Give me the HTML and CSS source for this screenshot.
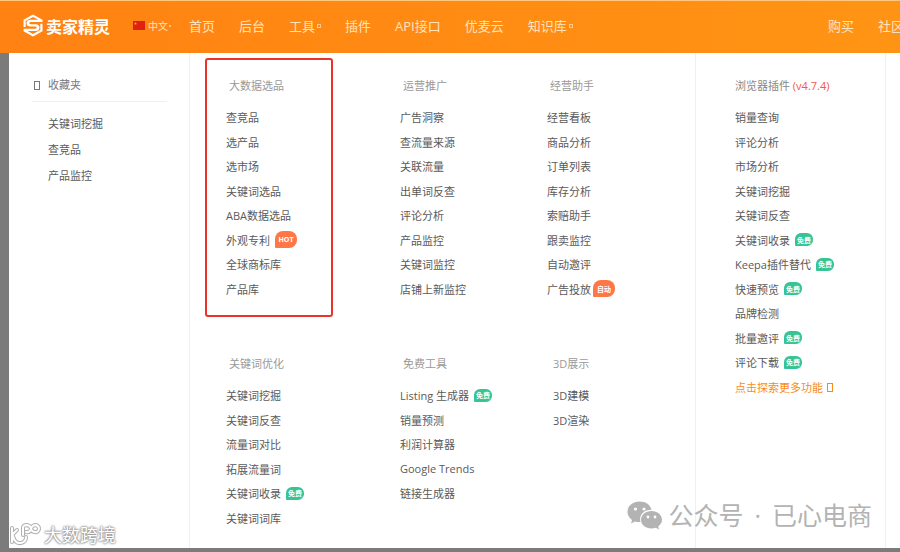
FILE: index.html
```html
<!DOCTYPE html>
<html lang="zh-CN">
<head>
    <meta charset="UTF-8">
    <meta name="viewport" content="width=device-width, initial-scale=1.0">
    <title>卖家精灵</title>
    <link rel="stylesheet" href="styles.css">
</head>
<body>
    <header class="header">
        <a class="logo" href="#">
            <svg class="logo-icon" viewBox="0 0 20 23" aria-hidden="true">
                <path d="M10 0.5 L19.5 5.8 V8 H8 Q6.300 8 6.300 9.300 Q6.300 10.200 8 10.200 H12.500 Q16.500 10.400 16.500 13.500 Q16.500 17 12.500 17 H4.500 L10 20 L17.300 16 V9.800 H19.500 V17.200 L10 22.500 L0.500 17.200 V14.800 H12 Q13.700 14.800 13.700 13.500 Q13.700 12.600 12 12.600 H7.500 Q3.500 12.400 3.500 9.300 Q3.500 5.800 7.500 5.800 H15.300 L10 3 L2.700 7 V13 H0.500 V5.800 Z" fill="#fff"/>
            </svg>
            <span>卖家精灵</span>
        </a>
        <a class="lang" href="#">
            <svg class="flag" viewBox="0 0 12 9" aria-hidden="true">
                <rect width="12" height="9" fill="#de2110"/>
                <path d="M2.500 1 L2.900 2.100 H4 L3.100 2.800 L3.400 3.900 L2.500 3.200 L1.600 3.900 L1.900 2.800 L1 2.100 H2.100 Z" fill="#ffb020"/>
            </svg>
            <span>中文</span>
            <i class="dot"></i>
        </a>
        <nav class="nav">
            <a href="#">首页</a>
            <a href="#">后台</a>
            <a href="#">工具<i class="caret"></i></a>
            <a href="#">插件</a>
            <a href="#">API接口</a>
            <a href="#">优麦云</a>
            <a href="#">知识库<i class="caret"></i></a>
        </nav>
        <nav class="nav nav-right">
            <a href="#">购买</a>
            <a href="#">社区</a>
        </nav>
    </header>

    <main class="panel">
        <aside class="favorites">
            <h2><i class="box"></i>收藏夹</h2>
            <ul>
                <li><a href="#">关键词挖掘</a></li>
                <li><a href="#">查竞品</a></li>
                <li><a href="#">产品监控</a></li>
            </ul>
        </aside>

        <div class="tools">
            <section class="group highlight">
                <h3>大数据选品</h3>
                <ul class="links">
                    <li><a href="#">查竞品</a></li>
                    <li><a href="#">选产品</a></li>
                    <li><a href="#">选市场</a></li>
                    <li><a href="#">关键词选品</a></li>
                    <li><a href="#">ABA数据选品</a></li>
                    <li><a href="#">外观专利</a><span class="hot">HOT</span></li>
                    <li><a href="#">全球商标库</a></li>
                    <li><a href="#">产品库</a></li>
                </ul>
            </section>
            <section class="group">
                <h3>运营推广</h3>
                <ul class="links">
                    <li><a href="#">广告洞察</a></li>
                    <li><a href="#">查流量来源</a></li>
                    <li><a href="#">关联流量</a></li>
                    <li><a href="#">出单词反查</a></li>
                    <li><a href="#">评论分析</a></li>
                    <li><a href="#">产品监控</a></li>
                    <li><a href="#">关键词监控</a></li>
                    <li><a href="#">店铺上新监控</a></li>
                </ul>
            </section>
            <section class="group">
                <h3>经营助手</h3>
                <ul class="links">
                    <li><a href="#">经营看板</a></li>
                    <li><a href="#">商品分析</a></li>
                    <li><a href="#">订单列表</a></li>
                    <li><a href="#">库存分析</a></li>
                    <li><a href="#">索赔助手</a></li>
                    <li><a href="#">跟卖监控</a></li>
                    <li><a href="#">自动邀评</a></li>
                    <li><a href="#">广告投放</a><span class="hot auto">自动</span></li>
                </ul>
            </section>
            <section class="group">
                <h3>关键词优化</h3>
                <ul class="links">
                    <li><a href="#">关键词挖掘</a></li>
                    <li><a href="#">关键词反查</a></li>
                    <li><a href="#">流量词对比</a></li>
                    <li><a href="#">拓展流量词</a></li>
                    <li><a href="#">关键词收录</a><span class="free">免费</span></li>
                    <li><a href="#">关键词词库</a></li>
                </ul>
            </section>
            <section class="group">
                <h3>免费工具</h3>
                <ul class="links">
                    <li><a href="#">Listing 生成器</a><span class="free">免费</span></li>
                    <li><a href="#">销量预测</a></li>
                    <li><a href="#">利润计算器</a></li>
                    <li><a href="#">Google Trends</a></li>
                    <li><a href="#">链接生成器</a></li>
                </ul>
            </section>
            <section class="group group-3d">
                <h3>3D展示</h3>
                <ul class="links">
                    <li><a href="#">3D建模</a></li>
                    <li><a href="#">3D渲染</a></li>
                </ul>
            </section>
        </div>

        <section class="plugins">
            <h3>浏览器插件 <span class="version">(v4.7.4)</span></h3>
            <ul class="links">
                <li><a href="#">销量查询</a></li>
                <li><a href="#">评论分析</a></li>
                <li><a href="#">市场分析</a></li>
                <li><a href="#">关键词挖掘</a></li>
                <li><a href="#">关键词反查</a></li>
                <li><a href="#">关键词收录</a><span class="free">免费</span></li>
                <li><a href="#">Keepa插件替代</a><span class="free">免费</span></li>
                <li><a href="#">快速预览</a><span class="free">免费</span></li>
                <li><a href="#">品牌检测</a></li>
                <li><a href="#">批量邀评</a><span class="free">免费</span></li>
                <li><a href="#">评论下载</a><span class="free">免费</span></li>
                <li><a class="more" href="#">点击探索更多功能<i class="box"></i></a></li>
            </ul>
        </section>
    </main>

    <div class="mark mark-left">
        <svg viewBox="0 0 32 24" aria-hidden="true">
            <g fill="none" stroke-linecap="round" stroke-linejoin="round">
                <g stroke="#b0b0b0" stroke-width="4">
                    <path d="M3 5 V19 M3 12 L8 7 M4 13 Q6 21 12 20 Q17 19 17 14"/>
                    <path d="M14 12 V5 Q14 2 18 2 Q22 3 22 6 Q21 10 17 9 M22 6 Q23 2 27 2 Q30 3 30 6 Q29 10 26 9 Q23 9 22 6"/>
                </g>
                <g stroke="#fff" stroke-width="2">
                    <path d="M3 5 V19 M3 12 L8 7 M4 13 Q6 21 12 20 Q17 19 17 14"/>
                    <path d="M14 12 V5 Q14 2 18 2 Q22 3 22 6 Q21 10 17 9 M22 6 Q23 2 27 2 Q30 3 30 6 Q29 10 26 9 Q23 9 22 6"/>
                </g>
            </g>
        </svg>
        <span>大数跨境</span>
    </div>
    <div class="mark mark-right">
        <svg viewBox="0 0 36 29" aria-hidden="true">
            <path d="M12.500 0.500 C5.500 0.500 0.500 5 0.500 10.800 C0.500 14.200 2.200 17 5 18.900 L4 22.500 L8 20.400 C9.500 20.900 11.500 21.200 13.500 21 C11.500 14 17 8.500 24.500 8.700 C23.500 4 18.700 0.500 12.500 0.500 Z" fill="#b3b3b3"/>
            <path d="M24.500 10 C18.500 10 14 14 14 18.800 C14 23.700 18.500 27.500 24.500 27.500 C26 27.500 27.500 27.200 28.800 26.800 L32 28.600 L31.200 25.500 C33.500 23.900 35 21.500 35 18.800 C35 14 30.500 10 24.500 10 Z" fill="#b3b3b3"/>
            <g fill="#fff">
                <circle cx="8.500" cy="8" r="1.600"/>
                <circle cx="17" cy="8" r="1.600"/>
                <circle cx="21" cy="16" r="1.400"/>
                <circle cx="28" cy="16" r="1.400"/>
            </g>
        </svg>
        <span>公众号</span>
        <span class="sep">·</span>
        <span>已心电商</span>
    </div>
</body>
</html>
```

FILE: styles.css
```css
*,
*::before {
    box-sizing: border-box;
}

body {
    margin: 0;
    position: relative;
    min-height: 100vh;
    overflow-x: hidden;
    font-family: "Open Sans", "Noto Sans CJK SC", sans-serif;
    font-size: 11px;
    color: #5a5a5a;
    background-color: #7b7b7b;
}

a {
    color: inherit;
    text-decoration: none;
}

ul {
    list-style: none;
    margin: 0;
    padding: 0;
}

h2,
h3 {
    margin: 0;
    font-size: 11px;
    font-weight: normal;
    line-height: 24px;
}

/* Header */
.header {
    display: flex;
    align-items: center;
    height: 53px;
    padding: 0 0 3px 23px;
    border-top: 1px solid #ffc77d;
    background: linear-gradient(to right, #ff8212, #ff9414);
    color: #ffe3bd;
    overflow: hidden;
    white-space: nowrap;
}

.logo {
    display: flex;
    align-items: center;
    gap: 3px;
    color: #fff;
    font-size: 16px;
    font-weight: bold;
}

.logo-icon {
    width: 20px;
    height: 23px;
}

.lang {
    display: flex;
    align-items: center;
    gap: 3px;
    margin-left: 23px;
    font-size: 10px;
}

.flag {
    width: 12px;
    height: 9px;
}

.dot {
    width: 2px;
    height: 2px;
    margin-left: -2px;
    background-color: #ffc27a;
}

.nav {
    display: flex;
    gap: 24px;
    margin-left: 18px;
    font-size: 13px;
}

.nav-right {
    margin-left: auto;
    margin-right: -4px;
}

.caret {
    display: inline-block;
    width: 4px;
    height: 4px;
    margin-left: 2px;
    border: 1px solid #ffc98a;
    vertical-align: 3px;
}

/* Mega menu */
.panel {
    display: grid;
    grid-template-columns: 181px 1fr 191px;
    min-height: calc(100vh - 57px);
    margin: 0 0 4px 9px;
    padding-right: 14px;
    background-color: #fff;
}

.favorites {
    padding: 20px 22px 0 23px;
    border-right: 1px solid #f0f0f0;
}

.favorites h2 {
    display: flex;
    align-items: center;
    height: 29px;
    gap: 8px;
    padding-left: 2px;
    padding-bottom: 4px;
    border-bottom: 1px solid #f0f0f0;
    color: #77777d;
}

.favorites ul {
    padding: 9px 0 0 16px;
    line-height: 26px;
}

.box {
    display: inline-block;
    width: 6px;
    height: 9px;
    border: 1px solid currentColor;
}

.tools {
    display: grid;
    grid-template-columns: 174fr 147fr 148fr;
    align-content: start;
    row-gap: 51px;
    padding: 21px 0 18px 36px;
}

.group h3 {
    padding-left: 3px;
    color: #999;
}

.group-3d {
    padding-left: 6px;
}

.group-3d h3 {
    padding-left: 0;
}

.highlight {
    position: relative;
}

.highlight::before {
    content: "";
    position: absolute;
    top: -16px;
    left: -21px;
    width: 128px;
    bottom: -16px;
    border: 2px solid #ea3329;
    border-radius: 3px;
    pointer-events: none;
}

.links {
    padding-top: 7px;
    white-space: nowrap;
}

.links li {
    display: flex;
    align-items: center;
    height: 24px;
}

.links li:nth-child(even) {
    height: 25px;
}

.plugins {
    padding: 21px 0 0 39px;
    border-left: 1px solid #f0f0f0;
    border-right: 1px solid #f0f0f0;
}

.plugins h3 {
    color: #888;
}

.version {
    color: #f4584a;
}

.more {
    color: #f98b1c;
}

.more .box {
    margin-left: 4px;
}

/* Badges */
.free,
.hot {
    display: flex;
    align-items: center;
    justify-content: center;
    margin-left: 5px;
    color: #fff;
    font-size: 7px;
    font-weight: bold;
}

.free {
    width: 18px;
    height: 13px;
    border-radius: 6px 6px 6px 1px;
    background-color: #36c495;
}

.hot {
    width: 22px;
    height: 17px;
    border-radius: 8px 8px 8px 1px;
    background-color: #ff7747;
}

.auto {
    margin-left: 2px;
}

/* Watermarks */
.mark {
    position: absolute;
    display: flex;
    align-items: center;
    white-space: nowrap;
}

.mark-left {
    left: 9px;
    bottom: 4px;
    gap: 3px;
    color: #fff;
    font-size: 18px;
    line-height: 26px;
    text-shadow: 0 0 2px #888, 0 0 2px #888, 0 0 3px #aaa;
}

.mark-left svg {
    width: 32px;
    height: 24px;
}

.mark-right {
    right: 28px;
    bottom: 19px;
    gap: 5px;
    color: #b3b3b3;
    font-size: 25px;
    line-height: 36px;
}

.mark-right svg {
    width: 36px;
    height: 29px;
}

.sep {
    padding: 0 6px;
}
```
